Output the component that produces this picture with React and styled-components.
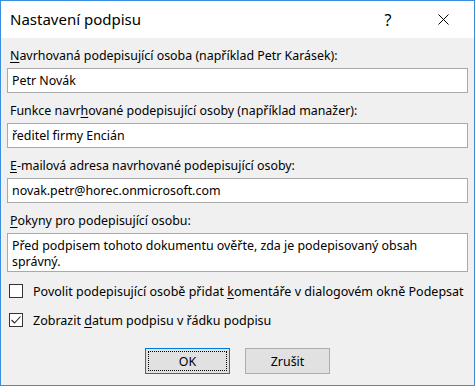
import React from "react";
import styled, { createGlobalStyle } from "styled-components";

const GlobalStyle = createGlobalStyle`
  html, body {
    margin: 0;
    padding: 0;
    background: #ffffff;
  }
  body {
    font-family: "Noto Sans", "Open Sans", sans-serif;
  }
`;

const Window = styled.div`
  box-sizing: border-box;
  width: 475px;
  height: 386px;
  border: 1px solid #3a8ee0;
  background: #f0f0f0;
  display: flex;
  flex-direction: column;
`;

const TitleBar = styled.div`
  height: 37px;
  background: #ffffff;
  display: flex;
  align-items: center;
  padding-left: 9px;
  flex-shrink: 0;
`;

const Title = styled.div`
  flex: 1;
  font-size: 15px;
  color: #000000;
  margin-top: -1px;
`;

const TitleButton = styled.div`
  width: ${props => props.w || 46}px;
  height: 37px;
  display: flex;
  align-items: center;
  justify-content: center;
  font-size: 16px;
  color: #000;
`;

const Body = styled.div`
  flex: 1;
  padding: 10px 6px 0 6px;
  display: flex;
  flex-direction: column;
`;

const Field = styled.div`
  display: flex;
  flex-direction: column;
  margin-bottom: 10px;
`;

const Label = styled.div`
  font-size: 12.4px;
  line-height: 16px;
  color: #000;
  padding-left: 3px;
  margin-bottom: 4px;
  white-space: nowrap;
`;

const Key = styled.span`
  text-decoration: underline;
  text-underline-offset: 2px;
`;

const Input = styled.div`
  box-sizing: border-box;
  height: ${props => props.h || 25}px;
  border: 1px solid #a9a9a9;
  background: #ffffff;
  padding: ${props => (props.multi ? "4px 4px" : "0 4px")};
  display: flex;
  align-items: ${props => (props.multi ? "flex-start" : "center")};
  font-size: 12.4px;
  line-height: 16px;
  color: #000;
`;

const CheckRow = styled.div`
  display: flex;
  align-items: center;
  height: 16px;
  padding-left: 2px;
  margin-top: ${props => props.top || 0}px;
  font-size: 12.5px;
  color: #000;
  white-space: nowrap;
`;

const Box = styled.div`
  box-sizing: border-box;
  width: 14px;
  height: 14px;
  border: 1px solid #333333;
  background: #ffffff;
  margin-right: 10px;
  display: flex;
  align-items: center;
  justify-content: center;
`;

const Buttons = styled.div`
  display: flex;
  justify-content: center;
  gap: 15px;
  margin-top: 20px;
`;

const Button = styled.div`
  box-sizing: border-box;
  width: 85px;
  height: 26px;
  background: #e1e1e1;
  border: 1px solid ${props => (props.primary ? "#0078d7" : "#adadad")};
  display: flex;
  align-items: center;
  justify-content: center;
  font-size: 12.4px;
  color: #000;
  position: relative;
  ${props =>
    props.primary &&
    `
    &::after {
      content: "";
      position: absolute;
      inset: 2px;
      border: 1px dotted #000;
    }
  `}
`;

export default function App() {
  return (
    <>
      <GlobalStyle />
      <Window>
        <TitleBar>
          <Title>Nastavení podpisu</Title>
          <TitleButton w={48}>?</TitleButton>
          <TitleButton w={62}>
            <svg width="11" height="11" viewBox="0 0 11 11">
              <path d="M0.5 0.5 L10.5 10.5 M10.5 0.5 L0.5 10.5" stroke="#000" strokeWidth="1" fill="none" />
            </svg>
          </TitleButton>
        </TitleBar>
        <Body>
          <Field>
            <Label>
              <Key>N</Key>avrhovaná podepisující osoba (například Petr Karásek):
            </Label>
            <Input>Petr Novák</Input>
          </Field>
          <Field>
            <Label>
              Funkce navr<Key>h</Key>ované podepisující osoby (například manažer):
            </Label>
            <Input>ředitel firmy Encián</Input>
          </Field>
          <Field>
            <Label>
              <Key>E</Key>-mailová adresa navrhované podepisující osoby:
            </Label>
            <Input>novak.petr@horec.onmicrosoft.com</Input>
          </Field>
          <Field>
            <Label>
              <Key>P</Key>okyny pro podepisující osobu:
            </Label>
            <Input multi h={39}>
              <span>
                Před podpisem tohoto dokumentu ověřte, zda je podepisovaný obsah
                <br />
                správný.
              </span>
            </Input>
          </Field>
          <CheckRow top={1}>
            <Box />
            <span>
              Povolit podepisující osobě přidat <Key>k</Key>omentáře v dialogovém okně Podepsat
            </span>
          </CheckRow>
          <CheckRow top={13}>
            <Box>
              <svg width="12" height="12" viewBox="0 0 12 12">
                <path d="M1.5 6 L4.5 9 L10.5 2.5" stroke="#222" strokeWidth="1.1" fill="none" />
              </svg>
            </Box>
            <span>
              Zobrazit <Key>d</Key>atum podpisu v řádku podpisu
            </span>
          </CheckRow>
          <Buttons>
            <Button primary>OK</Button>
            <Button>Zrušit</Button>
          </Buttons>
        </Body>
      </Window>
    </>
  );
}
